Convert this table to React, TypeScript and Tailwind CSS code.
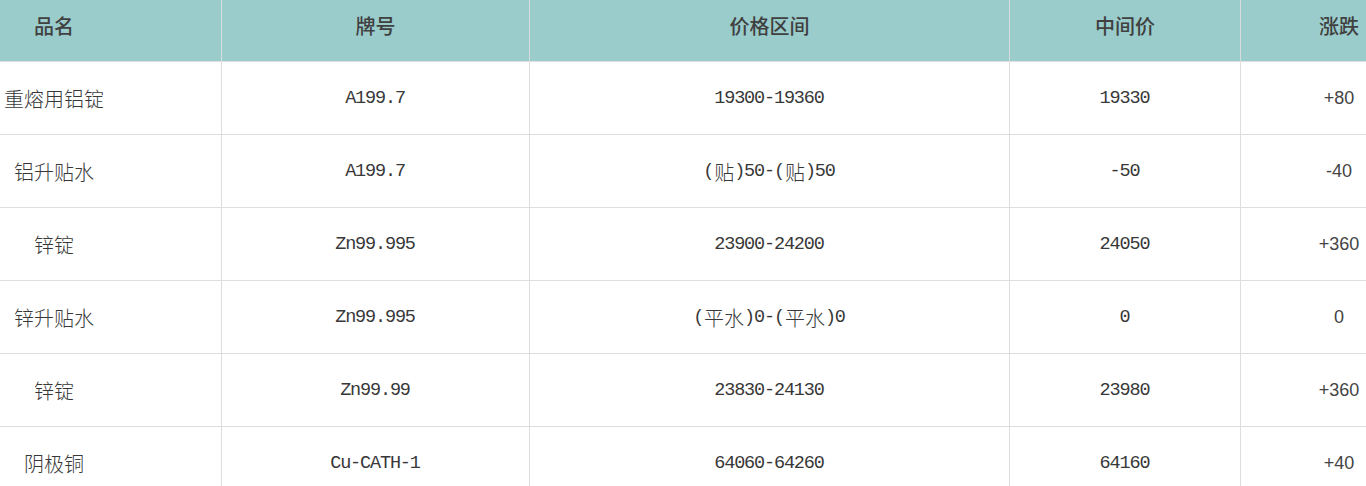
import React from "react";

const cols = ["w-[222px]", "w-[308px]", "w-[480px]", "w-[231px]", "w-[196px]"];

const rows: string[][] = [
  ["重熔用铝锭", "A199.7", "19300-19360", "19330", "+80"],
  ["铝升贴水", "A199.7", "(贴)50-(贴)50", "-50", "-40"],
  ["锌锭", "Zn99.995", "23900-24200", "24050", "+360"],
  ["锌升贴水", "Zn99.995", "(平水)0-(平水)0", "0", "0"],
  ["锌锭", "Zn99.99", "23830-24130", "23980", "+360"],
  ["阴极铜", "Cu-CATH-1", "64060-64260", "64160", "+40"],
];

function Mixed({ text }: { text: string }) {
  const parts: { cjk: boolean; s: string }[] = [];
  for (const ch of text) {
    const cjk = /[\u3000-\u9fff]/.test(ch);
    const last = parts[parts.length - 1];
    if (last && last.cjk === cjk) last.s += ch;
    else parts.push({ cjk, s: ch });
  }
  return (
    <span className="inline-flex items-center">
      {parts.map((p, i) =>
        p.cjk ? (
          <span key={i} className="font-['Noto_Sans_CJK_SC',sans-serif] text-[20px] font-light">
            {p.s}
          </span>
        ) : (
          <span key={i} className="font-['Liberation_Mono',monospace] text-[18.5px] tracking-[-1.15px] pr-[1px]">
            {p.s}
          </span>
        )
      )}
    </span>
  );
}

export default function App() {
  const headers = ["品名", "牌号", "价格区间", "中间价", "涨跌"];
  return (
    <div className="w-[1366px] h-[486px] overflow-hidden bg-white">
      <div className="w-[1437px]">
        <div className="flex h-[62px] bg-[#9acccc] border-b border-[#dedede]">
          {headers.map((h, i) => (
            <div
              key={h}
              className={`${cols[i]} shrink-0 flex items-center justify-center pb-[10px] ${i === 0 ? "pr-[113px]" : ""} ${i < 4 ? "border-r border-[#d6dcdc]" : ""} font-['Noto_Sans_CJK_SC',sans-serif] text-[20px] font-medium text-[#404040]`}
            >
              {h}
            </div>
          ))}
        </div>
        {rows.map((r, ri) => (
          <div key={ri} className="flex h-[73px] border-b border-[#dedede]">
            {r.map((c, i) => (
              <div
                key={i}
                className={`${cols[i]} shrink-0 flex items-center justify-center pt-[1px] ${i === 0 ? "pr-[113px]" : ""} ${i < 4 ? "border-r border-[#dedede]" : ""} text-[#383838] whitespace-nowrap`}
              >
                {i === 4 ? (
                  <span className="font-['Liberation_Sans',sans-serif] text-[18px] text-[#444444]">{c}</span>
                ) : (
                  <Mixed text={c} />
                )}
              </div>
            ))}
          </div>
        ))}
      </div>
    </div>
  );
}
